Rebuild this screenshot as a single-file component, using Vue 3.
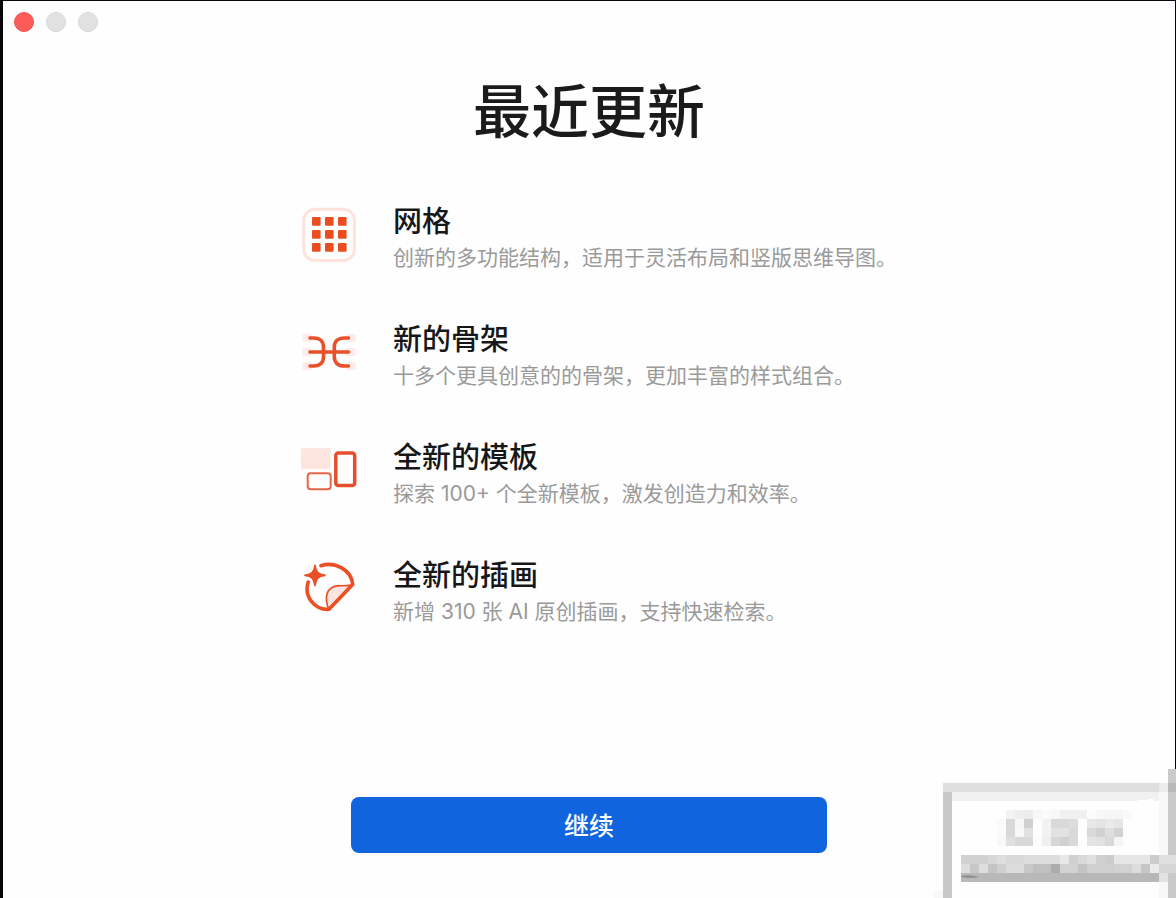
<script setup>
const features = [
  { icon: 'grid', title: '网格', text: '创新的多功能结构，适用于灵活布局和竖版思维导图。' },
  { icon: 'skeleton', title: '新的骨架', text: '十多个更具创意的的骨架，更加丰富的样式组合。' },
  { icon: 'template', title: '全新的模板', text: '探索 100+ 个全新模板，激发创造力和效率。' },
  { icon: 'sticker', title: '全新的插画', text: '新增 310 张 AI 原创插画，支持快速检索。' }
]

const gridX = [11, 24, 37]
const gridY = [10, 23, 36]
const rowY = [13, 27, 41]

// Mosaic rows: [row, first column, grey levels of consecutive cells]
const mosaicRows = [
  [4, 8, [243, 238, 236, 247, 251, 248, 240, 240, 240, 252, 248, 246, 246, 250]],
  [5, 7, [250, 217, 246, 208, 253, 243, 217, 217, 221, 254, 232, 228, 234, 230]],
  [6, 7, [251, 217, 248, 226, 254, 242, 226, 226, 217, 254, 217, 209, 222, 210]],
  [7, 7, [248, 224, 217, 217, 252, 240, 215, 208, 218, 254, 228, 226, 216, 246]],
  [9, 3, [209, 209, 209, 216, 222, 216, 216, 221, 221, 221, 221, 232, 208, 217, 224, 208, 204, 230, 230, 230, 230, 204, 224, 224]],
  [10, 3, [221, 200, 221, 196, 208, 220, 220, 200, 192, 192, 172, 210, 210, 196, 208, 208, 208, 210, 210, 221, 198, 234, 214, 214]],
  [13, 0, [248]]
]
const mosaic = mosaicRows.flatMap(([row, col, levels]) =>
  levels.map((v, i) => ({ x: (col + i) * 9, y: row * 9 + 5, fill: `rgb(${v},${v},${v})` }))
)
</script>

<template>
  <main class="window">
    <div class="controls">
      <button class="dot close" aria-label="关闭"></button>
      <button class="dot" aria-label="最小化"></button>
      <button class="dot" aria-label="缩放"></button>
    </div>

    <h1>最近更新</h1>

    <ul class="features">
      <li v-for="f in features" :key="f.icon" class="feature">
        <svg class="icon" viewBox="0 0 56 56" fill="none" aria-hidden="true">
          <g v-if="f.icon === 'grid'">
            <rect x="2.8" y="2.3" width="50.6" height="51.2" rx="11" stroke="#fde2dd" stroke-width="3" />
            <template v-for="y in gridY" :key="y">
              <rect v-for="x in gridX" :key="x" :x="x" :y="y" width="8.6" height="8.8" rx="1.2" fill="#ea4d20" />
            </template>
          </g>
          <g v-else-if="f.icon === 'skeleton'">
            <template v-for="y in rowY" :key="y">
              <rect x="1.5" :y="y - 4" width="9" height="8" rx="1.5" fill="#fdebe7" />
              <rect x="45.5" :y="y - 4" width="9" height="8" rx="1.5" fill="#fdebe7" />
            </template>
            <path
              d="M9 13H13C19 13 22.5 16.5 22.5 22V32C22.5 37.5 19 41 13 41H9M47.5 13H43.5C37 13 33.3 16.5 33.3 22V32C33.3 37.5 37 41 43.5 41H47.5M9 27H47.5"
              stroke="#e9502a" stroke-width="3.6" stroke-linecap="round"
            />
          </g>
          <g v-else-if="f.icon === 'template'">
            <rect x="0" y="5" width="29.5" height="21" rx="2" fill="#fde5e0" />
            <rect x="6.7" y="30.3" width="23" height="16" rx="3" stroke="#e4674a" stroke-width="2" />
            <rect x="34.8" y="10" width="18.9" height="32.4" rx="2.5" stroke="#e4502c" stroke-width="3.5" />
          </g>
          <g v-else stroke="#ea4f26" stroke-linejoin="round" stroke-linecap="round">
            <path d="M51.3 23.5L27.6 48.3C23.5 37 24.5 25.5 38 24.7C42 24.7 48 25.2 51.3 23.5Z" fill="#fde5df" stroke-width="1.7" />
            <path d="M20 4.7C34 0 50.5 9 51.7 23.5L28 48.3C14 49 2.5 36 7.2 21" stroke-width="3.6" />
            <path d="M14 4.5C14.8 11 17.2 13.6 24 14.3C17.2 15 14.8 17.6 14 24.5C13.2 17.6 10.8 15 4 14.3C10.8 13.6 13.2 11 14 4.5Z" fill="#ea4f26" stroke-width="1.8" />
          </g>
        </svg>
        <div>
          <h2>{{ f.title }}</h2>
          <p>{{ f.text }}</p>
        </div>
      </li>
    </ul>

    <button class="continue">继续</button>

    <svg class="mosaic" viewBox="0 0 242 129" aria-hidden="true" shape-rendering="crispEdges">
      <rect x="18" y="23" width="216" height="106" fill="#fefefe" />
      <rect x="9" y="14" width="216" height="9" fill="#dfdfdf" />
      <rect x="18" y="23" width="207" height="9" fill="#f1f1f1" />
      <rect x="9" y="23" width="9" height="106" fill="#c8c8c8" />
      <rect x="225" y="14" width="9" height="9" fill="#ececec" />
      <rect x="225" y="23" width="9" height="106" fill="#f8f8f8" />
      <path d="M202 32C207 30 213 31 220 30V33H202Z" fill="#fff" />
      <rect x="234" y="0" width="8" height="129" fill="#cacaca" />
      <rect x="234" y="14" width="8" height="9" fill="#b9b9b9" />
      <rect v-for="(c, i) in mosaic" :key="i" :x="c.x" :y="c.y" width="9" height="9" :fill="c.fill" />
      <rect x="27" y="104" width="198" height="9" fill="#b8b8b8" />
      <rect x="225" y="104" width="9" height="9" fill="#e2e2e2" />
      <path d="M27 107Q36 105 45 108Q36 110 27 108Z" fill="#909090" shape-rendering="auto" />
    </svg>
  </main>
</template>

<style>
body {
  background: #fff;
}
</style>

<style scoped>
.window {
  position: relative;
  box-sizing: border-box;
  min-height: 100vh;
  display: flex;
  flex-direction: column;
  align-items: center;
  padding-bottom: 45px;
  border: solid #08060a;
  border-width: 1px 1px 0 3px;
  background: #fefefe;
  font-family: Inter, "Noto Sans CJK SC", sans-serif;
}
.controls {
  align-self: stretch;
  display: flex;
  gap: 12px;
  padding: 11px;
}
.dot {
  width: 20px;
  height: 20px;
  padding: 0;
  border: 1px solid #d6d6d6;
  border-radius: 50%;
  background: #e2e2e2;
}
.close {
  border-color: #ea5550;
  background: #fc5b57;
}
h1 {
  margin: 25px 0 0;
  font-size: 58px;
  line-height: 88px;
  font-weight: 500;
  color: #1b1b1d;
}
.features {
  width: 576px;
  max-width: 100%;
  margin: 46px 0 0;
  padding: 0;
  list-style: none;
  display: flex;
  flex-direction: column;
  gap: 46px;
}
.feature {
  display: flex;
  align-items: flex-start;
  gap: 36px;
  white-space: nowrap;
}
.icon {
  flex: none;
  width: 56px;
  height: 56px;
  margin-top: 5px;
}
h2 {
  margin: 0;
  font-size: 29px;
  line-height: 40px;
  font-weight: 500;
  color: #171719;
}
p {
  margin: 0;
  font-size: 21px;
  line-height: 32px;
  font-weight: 400;
  color: #9a9a9a;
}
.continue {
  width: 476px;
  max-width: 100%;
  height: 56px;
  margin-top: auto;
  padding: 2px 0 0;
  border: 0;
  border-radius: 8px;
  background: #1064de;
  color: #fff;
  font: 500 25px/36px Inter, "Noto Sans CJK SC", sans-serif;
}
.mosaic {
  position: absolute;
  right: -1px;
  bottom: 0;
  width: 242px;
  height: 129px;
}
</style>
